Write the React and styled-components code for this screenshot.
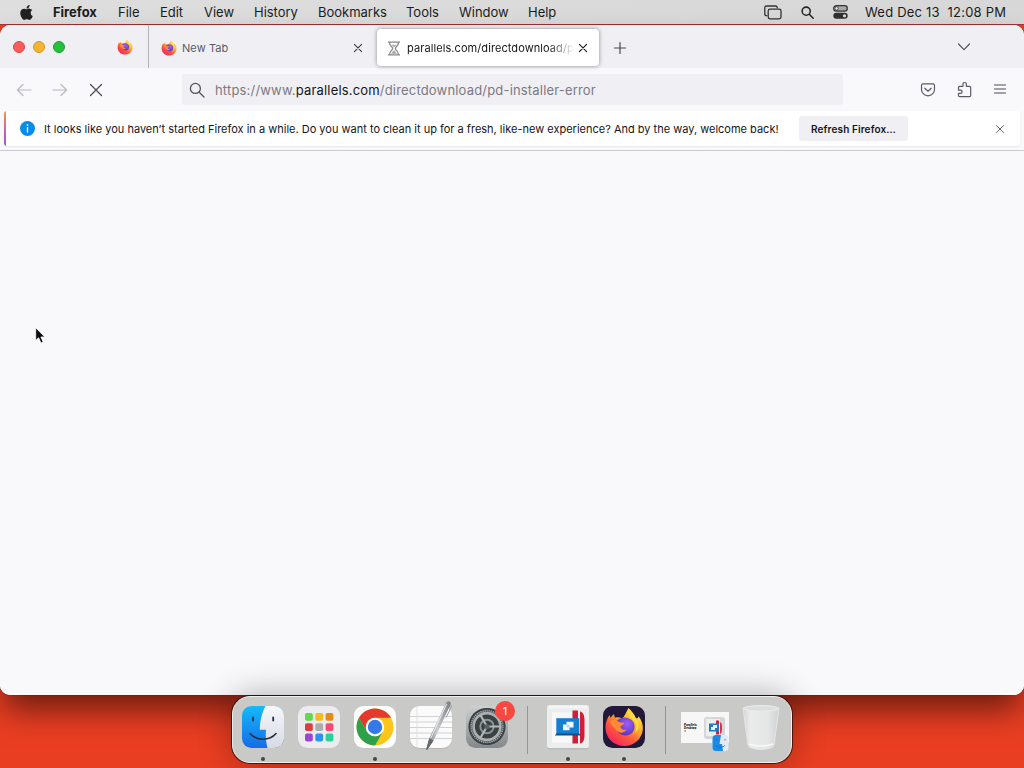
import React from "react";
import styled, { createGlobalStyle } from "styled-components";
import { FaApple } from "react-icons/fa";

const GlobalStyle = createGlobalStyle`
  * { box-sizing: border-box; }
  html, body { margin: 0; padding: 0; overflow: hidden; }
  body { font-family: Inter, "Liberation Sans", sans-serif; }
  svg { display: block; flex: none; overflow: visible; }
`;

const Desktop = styled.div`
  width: 1024px;
  height: 768px;
  display: flex;
  flex-direction: column;
  align-items: center;
  background: #e93e22;
  overflow: hidden;
`;

const MenuBar = styled.header`
  width: 100%;
  height: 25px;
  flex: none;
  display: flex;
  align-items: flex-start;
  padding-left: 19px;
  background: linear-gradient(90deg, #dedede, #d7d7d7);
  border-bottom: 1px solid #a93438;
  color: #1c1c1c;
`;

const MenuText = styled.span`
  width: ${(p) => p.$w}px;
  margin-left: ${(p) => p.$gap}px;
  font-size: 13px;
  line-height: 24px;
  letter-spacing: ${(p) => p.$ls || 0}px;
  font-weight: ${(p) => (p.$bold ? 700 : 400)};
  white-space: pre;
`;

const MenuIcon = styled.span`
  width: ${(p) => p.$w}px;
  margin-left: ${(p) => p.$gap || 0}px;
  height: 24px;
  display: flex;
  align-items: center;
  justify-content: center;
`;

const Browser = styled.main`
  width: 100%;
  height: 670px;
  flex: none;
  display: flex;
  flex-direction: column;
  border-radius: 10px;
  background: #f9f9fb;
  box-shadow: 0 0 1px rgba(0, 0, 0, 0.7), 0 18px 32px -4px rgba(0, 0, 0, 0.55);
  overflow: hidden;
`;

const TabStrip = styled.div`
  height: 43px;
  flex: none;
  display: flex;
  background: #f0f0f4;
`;

const Lights = styled.div`
  width: 105px;
  padding-left: 13px;
  display: flex;
  gap: 8px;
  padding-top: 16px;
`;

const Light = styled.i`
  width: 12px;
  height: 12px;
  border-radius: 50%;
  background: ${(p) => p.$fill};
  border: 1px solid ${(p) => p.$edge};
`;

const PinnedTab = styled.div`
  width: 44px;
  border-right: 1px solid #b4b4ba;
  padding: 14px 0 0 12px;
`;

const Tab = styled.div`
  width: 228px;
  display: flex;
  align-items: center;
  padding: 3px 15px 0 12px;
`;

const ActiveTab = styled(Tab)`
  width: 222px;
  height: 37px;
  margin-top: 4px;
  padding: 1px 12px 0 10px;
  background: #fff;
  border-radius: 4px;
  box-shadow: 0 0 4px rgba(100, 100, 110, 0.75);
`;

const TabLabel = styled.span`
  flex: 1;
  min-width: 0;
  overflow: hidden;
  white-space: nowrap;
  margin-left: ${(p) => (p.$fade ? 6 : 5)}px;
  margin-right: ${(p) => (p.$fade ? 5 : 0)}px;
  font-size: 11px;
  line-height: 18px;
  letter-spacing: ${(p) => p.$ls}px;
  color: ${(p) => (p.$fade ? "#15141a" : "#5b5b66")};
  ${(p) => p.$fade && "mask-image: linear-gradient(90deg, #000 calc(100% - 26px), transparent);"}
`;

const NewTab = styled.div`
  padding: 17px 0 0 15px;
`;

const TabMenu = styled.div`
  margin-left: auto;
  padding: 17px 53px 0 0;
`;

const NavBar = styled.div`
  height: 43px;
  flex: none;
  display: flex;
  align-items: center;
  padding: 0 17px 0 16px;
`;

const NavButtons = styled.div`
  width: 166px;
  display: flex;
  gap: 20px;
`;

const UrlBar = styled.div`
  width: 661px;
  height: 31px;
  display: flex;
  align-items: center;
  padding-left: 7px;
  border-radius: 3px;
  background: #f0f0f4;
  font-size: 13px;
  letter-spacing: ${(p) => p.$ls}px;
  color: #7a7a82;
  white-space: nowrap;
`;

const UrlText = styled.span`
  margin-left: 10px;
  b { font-weight: 400; color: #15141a; }
`;

const NavTools = styled.div`
  margin-left: auto;
  display: flex;
  align-items: center;
  gap: 20px;
`;

const InfoBar = styled.section`
  height: 35px;
  margin: 0 4px;
  flex: none;
  display: flex;
  align-items: center;
  background: #fff;
  border-radius: 3px;
  overflow: hidden;
  box-shadow: 0 1px 2px rgba(58, 57, 68, 0.09);
`;

const Accent = styled.i`
  width: 2px;
  height: 100%;
  background: linear-gradient(#f09a4a, #d566a0 45%, #9959d8);
  margin-right: 14px;
`;

const InfoText = styled.span`
  width: 755px;
  margin-left: 9px;
  font-size: 11px;
  letter-spacing: ${(p) => p.$ls}px;
  color: #15141a;
  white-space: nowrap;
`;

const RefreshButton = styled.button`
  width: 109px;
  height: 25px;
  padding: 0;
  border: 0;
  border-radius: 3px;
  background: #f0f0f4;
  color: #15141a;
  font: 600 10px Inter, sans-serif;
  letter-spacing: ${(p) => p.$ls}px;
`;

const InfoClose = styled.span`
  margin-left: auto;
  margin-right: 16px;
`;

const Page = styled.div`
  flex: 1;
  margin-top: 4px;
  border-top: 1px solid #ccccd1;
  background: #f9f9fb;
`;

const Dock = styled.nav`
  width: 560px;
  height: 67px;
  margin-top: 1px;
  flex: none;
  display: flex;
  padding-left: 2px;
  position: relative;
  border: 1px solid #eeeeec;
  border-radius: 18px;
  background: #c9cac8;
  box-shadow: 0 0 0 1px rgba(40, 10, 5, 0.75), 0 0 34px rgba(0, 0, 0, 0.32);
`;

const DockItem = styled.div`
  width: 56px;
  height: 65px;
  padding-top: 8px;
  display: flex;
  flex-direction: column;
  align-items: center;
`;

const Running = styled.i`
  width: 4px;
  height: 4px;
  margin-top: 8px;
  border-radius: 50%;
  background: #454545;
`;

const Divider = styled.i`
  width: 1px;
  height: 48px;
  margin: 9px ${(p) => p.$right}px 0 ${(p) => p.$left}px;
  background: #939493;
`;

const IconHolder = styled.div`
  position: relative;
`;

const Badge = styled.span`
  position: absolute;
  top: -4px;
  right: -6px;
  width: 20px;
  height: 20px;
  border-radius: 50%;
  background: #fa4742;
  color: #fff;
  font-size: 11px;
  line-height: 20px;
  text-align: center;
`;

const Pointer = styled.div`
  position: absolute;
  left: 35px;
  top: 327px;
`;

const Cross = ({ size = 8, w = 1.2, color = "#3c3b43" }) => (
  <svg width={size} height={size} viewBox="0 0 10 10">
    <path d="M.5.5l9 9M9.5.5l-9 9" fill="none" stroke={color} strokeWidth={(w * 10) / size} strokeLinecap="round" />
  </svg>
);

const Arrow = ({ flip }) => (
  <svg width="16" height="16" viewBox="0 0 16 16" transform={flip ? "scale(-1 1)" : undefined}>
    <path d="M15 8H1.5M7 2.5L1.4 8L7 13.5" fill="none" stroke="#b9b9bf" strokeWidth="1.2" strokeLinecap="round" strokeLinejoin="round" />
  </svg>
);

const Magnifier = ({ size, w, color }) => (
  <svg width={size} height={size} viewBox="0 0 16 16">
    <circle cx="6.4" cy="6.4" r="5" fill="none" stroke={color} strokeWidth={w} />
    <path d="M10.2 10.2L15 15" stroke={color} strokeWidth={w} strokeLinecap="round" />
  </svg>
);

const FirefoxMark = ({ size, id }) => (
  <svg width={size} height={size} viewBox="0 0 40 40">
    <defs>
      <linearGradient id={id + "f"} x1=".85" y1=".05" x2=".2" y2=".95">
        <stop offset="0" stopColor="#fff04a" />
        <stop offset=".35" stopColor="#ffb12c" />
        <stop offset=".65" stopColor="#ff5b3c" />
        <stop offset="1" stopColor="#f5245f" />
      </linearGradient>
      <radialGradient id={id + "g"} cx=".6" cy=".35" r=".7">
        <stop offset="0" stopColor="#a05cf5" />
        <stop offset="1" stopColor="#5136b8" />
      </radialGradient>
    </defs>
    <path d="M24.5 1C27.5 4 30.5 7 32 11.3C33.6 11.6 34.4 10.4 34.5 9.2C37.6 13.2 39.2 17.8 38.8 22.5C38 32 30 39 20.3 39C9.8 39 1.5 31 1.5 20.5C1.5 15 3.2 11.2 5.6 8L6.4 10.8L9.8 7L11 10.8C13.3 10 15.8 10.2 18 11.5C20.5 9.5 22 5.5 24.5 1Z" fill={`url(#${id}f)`} />
    <path d="M12.5 14.5C15.5 10 22 9.3 26 12C31 14.6 31.8 20.5 29 24.8C25.6 29.6 18.4 29.6 14.6 25.6C12.2 23 11.6 19.4 12.5 14.5Z" fill={`url(#${id}g)`} />
    <path d="M6 15C9 12.5 11.5 12.6 14 14.4C16.5 15.6 18.4 15.5 20.4 15.8C20 17.8 17.6 18.2 16.4 19.4C16.8 22 19.5 23.4 22.5 22.6C20.8 26.6 14.6 26.6 12 22.8C10 21 8 18 6 15Z" fill="#ff8c34" />
    <path d="M24.4 4C23.8 8 26.5 10.2 29.5 13C33.5 17 33 23 30.5 26.5C35.6 22 36 16 31.6 11.4C28.6 8.4 25.6 6.5 24.4 4Z" fill="#ffdf45" />
  </svg>
);

const Finder = () => (
  <svg width="44" height="44" viewBox="0 0 44 44">
    <defs>
      <linearGradient id="fb" x1="0" y1="0" x2="0" y2="1"><stop stopColor="#13bdf9" /><stop offset="1" stopColor="#1769e6" /></linearGradient>
      <linearGradient id="fw" x1="0" y1="0" x2="0" y2="1"><stop stopColor="#f7f8fa" /><stop offset="1" stopColor="#d6dae5" /></linearGradient>
      <clipPath id="fc"><rect x="1" y="1" width="42" height="42" rx="9.5" /></clipPath>
    </defs>
    <g clipPath="url(#fc)">
      <rect width="44" height="44" fill="url(#fb)" />
      <path d="M24.5 1C20.5 8.5 19 16 18.8 24.8H25C24.4 31 24.8 37 26.8 44H44V0Z" fill="url(#fw)" />
    </g>
    <path d="M12 12.5v3M32.2 12.5v3" stroke="#18324d" strokeWidth="1.8" strokeLinecap="round" />
    <path d="M9 28.5C15.5 36 28.5 36.2 35 28.5" fill="none" stroke="#26323f" strokeWidth="1.6" strokeLinecap="round" />
  </svg>
);

const launchColors = ["#61d94b", "#f7b91e", "#e78a1d", "#e23a42", "#a9adad", "#f24c74", "#9a45d6", "#2c93ef", "#2bcf98"];

const Launchpad = () => (
  <svg width="44" height="44" viewBox="0 0 44 44">
    <rect x="1" y="1" width="42" height="42" rx="9.5" fill="#ececee" />
    {launchColors.map((c, i) => (
      <rect key={c} x={8 + (i % 3) * 10.3} y={8 + Math.floor(i / 3) * 10.3} width="7.8" height="7.8" rx="1.8" fill={c} />
    ))}
  </svg>
);

const Chrome = () => (
  <svg width="44" height="44" viewBox="0 0 44 44">
    <rect x="1" y="1" width="42" height="42" rx="9.5" fill="#fdfdfd" />
    <circle cx="22" cy="22" r="18.5" fill="#fbc51c" />
    <path d="M5.98 12.75A18.5 18.5 0 0 1 38.02 12.75H22A9.25 9.25 0 0 0 14 26.6Z" fill="#e5392f" />
    <path d="M5.98 12.75A18.5 18.5 0 0 0 22 40.5L30 26.6A9.25 9.25 0 0 1 14 26.6Z" fill="#2da04c" />
    <circle cx="22" cy="22" r="9.2" fill="#fff" />
    <circle cx="22" cy="22" r="7.2" fill="#3579e8" />
  </svg>
);

const TextEdit = () => (
  <svg width="44" height="44" viewBox="0 0 44 44">
    <defs><linearGradient id="pen"><stop stopColor="#70767a" /><stop offset=".45" stopColor="#c9ced1" /><stop offset="1" stopColor="#747b80" /></linearGradient></defs>
    <rect x="1" y="2" width="42" height="42" rx="9.5" fill="#999" opacity=".45" />
    <rect x="1" y="1" width="42" height="42" rx="9.5" fill="#fbfbfb" />
    <path d="M1 11.5h42M1 17h42M1 22.5h42M1 28h42M1 33.5h42" stroke="#c5c6c8" strokeWidth=".8" />
    <path d="M8 1v42" stroke="#dfdedd" strokeWidth=".8" />
    <path d="M37.2 -2.6Q38.8 -4.6 40.6 -3.4T41.6 -.6L24.6 35.4L18 45L17.2 44.6L20.2 33.4Z" fill="url(#pen)" />
    <path d="M37.6 -1L21.8 33" fill="none" stroke="#e8ebec" strokeWidth="1" />
    <path d="M41.4 0L42.6 1L37.2 12.5" fill="none" stroke="#8f9597" strokeWidth=".9" />
    <path d="M20.2 33.4L24.6 35.4L18 45L17.2 44.6Z" fill="#62686c" />
  </svg>
);

const Settings = () => (
  <svg width="44" height="44" viewBox="0 0 44 44">
    <defs><linearGradient id="sg" x1="0" y1="0" x2="0" y2="1"><stop stopColor="#cbd0d2" /><stop offset="1" stopColor="#85888a" /></linearGradient></defs>
    <rect x="1" y="1" width="42" height="42" rx="9.5" fill="url(#sg)" />
    <circle cx="22" cy="21.5" r="18.6" fill="#3b4043" />
    <circle cx="22" cy="21.5" r="15.8" fill="none" stroke="#a3a8aa" strokeWidth="1.8" strokeDasharray="1.3 .8" />
    <circle cx="22" cy="21.5" r="13.4" fill="none" stroke="#aab0b2" strokeWidth="2.6" />
    <circle cx="22" cy="21.5" r="6.7" fill="none" stroke="#8d9497" strokeWidth="2" />
    <path d="M22 21.5H35M22 21.5L15.5 10.3M22 21.5L15.5 32.7" stroke="#b2b8ba" strokeWidth="2.1" />
    <circle cx="22" cy="21.5" r="2.6" fill="#596063" />
  </svg>
);

const Parallels = () => (
  <svg width="44" height="44" viewBox="0 0 44 44">
    <rect x="1" y="0" width="42" height="44.5" rx="3" fill="#a8aaac" opacity=".5" />
    <rect x="1" y="0" width="42" height="43" rx="2.5" fill="#eceded" />
    <path d="M3 2H41" stroke="#fff" strokeWidth="1" />
    <path d="M6 7.5H26V37.5H6Z" fill="#f8f8f8" />
    <path d="M26.5 5.5H32V38.5H26.5Z" fill="#cf1e38" />
    <path d="M32 7.5H34.5V37H32Z" fill="#f7f7f7" />
    <path d="M34 6.5C37.5 7 38.5 11 38.5 16V30C38.5 35 37 38 34 38.5Z" fill="#d81a38" />
    <path d="M10.3 13.2H33.3V29.2H10.3Z" fill="#147ed3" />
    <path d="M10.3 28.6H33.3L34.6 30.6H9Z" fill="#174d86" />
    <path d="M20.5 16.8H27.5V22.6H23.5V25.2H17V19.6H20.5Z" fill="#eff8ff" />
    <path d="M20.7 19.7H23.6V22.5H20.7Z" fill="#b1d7f4" />
  </svg>
);

const FirefoxApp = () => (
  <svg width="44" height="44" viewBox="0 0 44 44">
    <rect x="1" y="1" width="42" height="42" rx="9.5" fill="#21183a" />
    <svg x="2" y="2" width="40" height="40"><FirefoxMark size={40} id="dock" /></svg>
  </svg>
);

const DiskImage = () => (
  <svg width="50" height="44" viewBox="0 0 50 44">
    <rect x="1" y="7" width="48" height="31" fill="#f7f7f7" />
    <g fontFamily="Inter, sans-serif" fontWeight="800" fontSize="3" fill="#222">
      <text x="4" y="20.5">Parallels</text><text x="4" y="24.2">Desktop</text>
      <text x="4" y="27" fontSize="2" fontWeight="400">18</text>
    </g>
    <rect x="24" y="12" width="21" height="22" rx="3" fill="#d5d6d7" />
    <path d="M26 14H40V31H26Z" fill="#edeeee" />
    <path d="M36 15.5h3v14h-3z" fill="#cf1e38" /><path d="M40 17q2 1 2 4v4q0 3-2 4z" fill="#d73343" />
    <path d="M29 18.5h10v8H29z" fill="#197ccb" /><path d="M33 20h4v3h-2v2h-4v-3h2z" fill="#e9f6ff" />
    <rect x="32.5" y="30" width="16" height="16" rx="3.5" fill="#e2ebf3" />
    <path d="M36 30H41L39.5 39H42L43 46H36Q32.5 46 32.5 42.5V33.5Q32.5 30 36 30Z" fill="#178bec" />
    <path d="M36.5 34v1.5M45 34v1.5M36 40.5q4.5 3.5 9 0" fill="none" stroke="#2d6597" strokeWidth=".8" />
  </svg>
);

const Trash = () => (
  <svg width="44" height="44" viewBox="0 0 44 44">
    <defs><linearGradient id="tr"><stop stopColor="#d3d6d7" /><stop offset=".2" stopColor="#ebebeb" /><stop offset=".7" stopColor="#e4e5e5" /><stop offset="1" stopColor="#cfd1d2" /></linearGradient></defs>
    <path d="M4 3Q22 -2 40 3L35 40Q34 44 22 44.5Q10 44 9 40Z" fill="url(#tr)" stroke="#e5e6e6" strokeWidth="1" />
    <ellipse cx="22" cy="3.4" rx="17.5" ry="2.8" fill="#dcdede" stroke="#eeeeee" strokeWidth=".8" />
    <path d="M10 39Q22 43 34 39" fill="none" stroke="#f9f9f9" strokeWidth="1.5" />
  </svg>
);

const menus = [
  ["File", 21, 20], ["Edit", 24, 21], ["View", 29, 20], ["History", 44, 21],
  ["Bookmarks", 67, 20], ["Tools", 32, 21], ["Window", 49, 21], ["Help", 28, 20],
];

export default function App() {
  return (
    <Desktop>
      <GlobalStyle />
      <MenuBar>
        <MenuIcon $w={15}><FaApple size={17} color="#222" /></MenuIcon>
        <MenuText $w={45} $gap={19} $bold $ls={-0.02}>Firefox</MenuText>
        {menus.map(([label, w, gap]) => <MenuText key={label} $w={w} $gap={gap} $ls={-0.02}>{label}</MenuText>)}
        <MenuIcon $w={18} $gap={208}>
          <svg width="18" height="15" viewBox="0 0 18 15" fill="none" stroke="#333" strokeWidth="1.3">
            <path d="M3.2 10.7H2.5Q.8 10.7.8 9V2.7Q.8 1 2.5 1H11.5Q13.2 1 13.2 2.7V3.2" />
            <rect x="4.2" y="4.2" width="12.8" height="9.6" rx="1.8" />
          </svg>
        </MenuIcon>
        <MenuIcon $w={13} $gap={19}><Magnifier size={13} w={1.9} color="#252525" /></MenuIcon>
        <MenuIcon $w={15} $gap={19}>
          <svg width="15" height="14" viewBox="0 0 15 14">
            <rect x=".7" y=".7" width="13.6" height="5.4" rx="2.7" fill="#aaa" stroke="#333" strokeWidth="1.2" />
            <circle cx="3.6" cy="3.4" r="1.7" fill="#eee" stroke="#333" strokeWidth=".8" />
            <rect x=".3" y="7.8" width="14.4" height="6" rx="3" fill="#303030" />
            <circle cx="11.5" cy="10.8" r="1.6" fill="#ddd" />
          </svg>
        </MenuIcon>
        <MenuText $w={142} $gap={17} $ls={0.21}>{"Wed Dec 13  12:08 PM"}</MenuText>
      </MenuBar>

      <Browser>
        <TabStrip>
          <Lights>
            <Light $fill="#fb5b59" $edge="#d94a4d" />
            <Light $fill="#f5b62f" $edge="#cf9831" />
            <Light $fill="#24c23c" $edge="#249a35" />
          </Lights>
          <PinnedTab><FirefoxMark size={16} id="pin" /></PinnedTab>
          <Tab>
            <FirefoxMark size={16} id="tab" />
            <TabLabel $ls={0.08}>New Tab</TabLabel>
            <Cross size={8} w={1.1} />
          </Tab>
          <ActiveTab>
            <svg width="14" height="15" viewBox="0 0 14 15" fill="none" stroke="#88888b" strokeWidth="1.3">
              <path d="M1 1.2H13M1 13.8H13M2.5 1.5C2.5 5 5.6 5.5 5.6 7.5C5.6 9.5 2.5 10 2.5 13.5M11.5 1.5C11.5 5 8.4 5.5 8.4 7.5C8.4 9.5 11.5 10 11.5 13.5" />
              <path d="M4.5 3.8H9.5L7 6.5ZM7 9L10 12.8H4Z" fill="#aaaaac" stroke="none" />
            </svg>
            <TabLabel $fade $ls={0.08}>parallels.com/directdownload/pd-installer-error</TabLabel>
            <Cross size={8} w={1.2} color="#222129" />
          </ActiveTab>
          <NewTab>
            <svg width="12" height="12" viewBox="0 0 12 12"><path d="M6 .5V11.5M.5 6H11.5" stroke="#4a4951" strokeWidth="1.2" strokeLinecap="round" /></svg>
          </NewTab>
          <TabMenu>
            <svg width="14" height="10" viewBox="0 0 14 10"><path d="M1.5 2L7 7.7L12.5 2" fill="none" stroke="#55545c" strokeWidth="1.2" strokeLinecap="round" strokeLinejoin="round" /></svg>
          </TabMenu>
        </TabStrip>

        <NavBar>
          <NavButtons>
            <Arrow /><Arrow flip />
            <svg width="16" height="16" viewBox="0 0 16 16"><path d="M2.5 2.5L13.5 13.5M13.5 2.5L2.5 13.5" stroke="#4b4a52" strokeWidth="1.2" strokeLinecap="round" /></svg>
          </NavButtons>
          <UrlBar $ls={0.18}>
            <Magnifier size={16} w={1.3} color="#54535b" />
            <UrlText>https://www.<b>parallels.com</b>/directdownload/pd-installer-error</UrlText>
          </UrlBar>
          <NavTools>
            <svg width="16" height="16" viewBox="1 0 16 16" fill="none" stroke="#5b5a62" strokeWidth="1.2" strokeLinecap="round" strokeLinejoin="round">
              <path d="M3.2 1.9H12.8Q14.5 1.9 14.5 3.6V7.2C14.5 11 11.6 13.8 8 13.8S1.5 11 1.5 7.2V3.6Q1.5 1.9 3.2 1.9Z" />
              <path d="M4.8 6.2L8 9.2L11.2 6.2" />
            </svg>
            <svg width="16" height="16" viewBox="0.5 0.5 16 16" fill="none" stroke="#5b5a62" strokeWidth="1.2" strokeLinejoin="round">
              <path d="M2 8.7V6Q2 4.8 3.2 4.8H6.5V2.8Q6.5 1 8.2 1T9.9 2.8V4.8H13Q14.2 4.8 14.2 6V14Q14.2 15.2 13 15.2H3.2Q2 15.2 2 14V11.9H3.9Q5.6 11.9 5.6 10.3T3.9 8.7Z" />
            </svg>
            <svg width="14" height="16" viewBox="0 0 14 16"><path d="M1.5 3H12.5M1.5 7H12.5M1.5 11H12.5" stroke="#4c4b53" strokeWidth="1.1" strokeLinecap="round" /></svg>
          </NavTools>
        </NavBar>

        <InfoBar>
          <Accent />
          <svg width="15" height="15" viewBox="0 0 15 15">
            <circle cx="7.5" cy="7.5" r="7.5" fill="#078ce8" />
            <path d="M7.5 6.6V11" stroke="#fff" strokeWidth="1.3" strokeLinecap="round" /><circle cx="7.5" cy="4.1" r=".9" fill="#fff" />
          </svg>
          <InfoText $ls={0}>It looks like you haven’t started Firefox in a while. Do you want to clean it up for a fresh, like-new experience? And by the way, welcome back!</InfoText>
          <RefreshButton $ls={0.12}>Refresh Firefox…</RefreshButton>
          <InfoClose><Cross size={8} w={0.9} color="#55545b" /></InfoClose>
        </InfoBar>
        <Page />
      </Browser>

      <Dock>
        <DockItem><Finder /><Running /></DockItem>
        <DockItem><Launchpad /></DockItem>
        <DockItem><Chrome /><Running /></DockItem>
        <DockItem><TextEdit /></DockItem>
        <DockItem><IconHolder><Settings /><Badge>1</Badge></IconHolder></DockItem>
        <Divider $left={12} $right={12} />
        <DockItem><Parallels /><Running /></DockItem>
        <DockItem><FirefoxApp /><Running /></DockItem>
        <Divider $left={13} $right={11} />
        <DockItem><DiskImage /></DockItem>
        <DockItem><Trash /></DockItem>
      </Dock>

      <Pointer>
        <svg width="12" height="18" viewBox="0 0 12 18">
          <path d="M.7 .7V13.4L3.6 10.8L6 16L8.2 15L5.9 10H9.8Z" fill="#0b0b0b" stroke="#fff" strokeWidth=".8" />
        </svg>
      </Pointer>
    </Desktop>
  );
}
